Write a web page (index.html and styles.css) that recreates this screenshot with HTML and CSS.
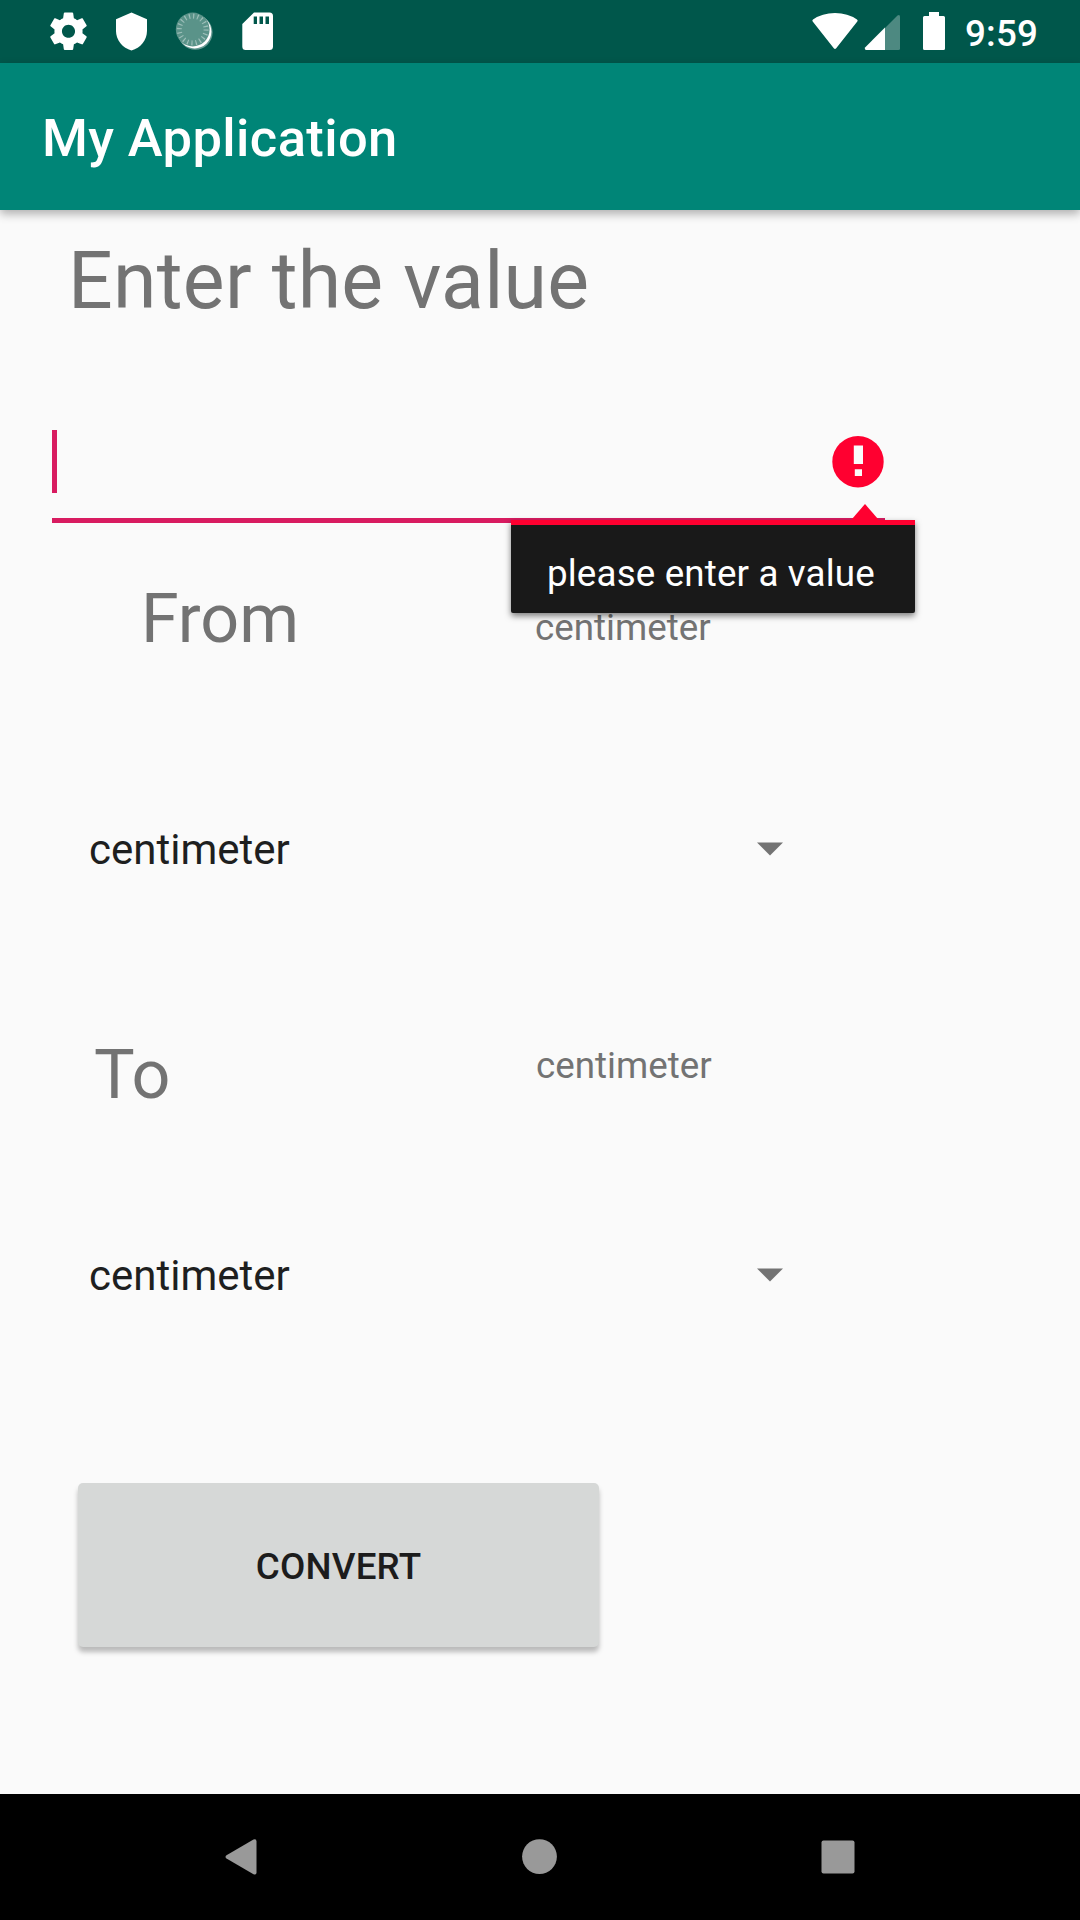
FILE: index.html
```html
<!DOCTYPE html>
<html lang="en">
<head>
<meta charset="utf-8">
<title>My Application</title>
<link rel="stylesheet" href="styles.css">
</head>
<body>
<div class="screen">
  <div class="status-bar">
    <svg class="status-left" width="300" height="63" viewBox="0 0 300 63" fill="#fff">
      <path transform="translate(46 8.8) scale(1.875)" d="M19.43 12.98c.04-.32.07-.64.07-.98s-.03-.66-.07-.98l2.11-1.65c.19-.15.24-.42.12-.64l-2-3.46c-.12-.22-.39-.3-.61-.22l-2.49 1c-.52-.4-1.08-.73-1.69-.98l-.38-2.65C14.46 2.18 14.25 2 14 2h-4c-.25 0-.46.18-.49.42l-.38 2.65c-.61.25-1.17.59-1.69.98l-2.49-1c-.23-.09-.49 0-.61.22l-2 3.46c-.13.22-.07.49.12.64l2.11 1.65c-.04.32-.07.65-.07.98s.03.66.07.98l-2.11 1.65c-.19.15-.24.42-.12.64l2 3.46c.12.22.39.3.61.22l2.49-1c.52.4 1.08.73 1.69.98l.38 2.65c.03.24.24.42.49.42h4c.25 0 .46-.18.49-.42l.38-2.65c.61-.25 1.17-.59 1.69-.98l2.49 1c.23.09.49 0 .61-.22l2-3.46c.12-.22.07-.49-.12-.64l-2.11-1.65zM12 15.5c-1.93 0-3.5-1.57-3.5-3.5s1.57-3.5 3.5-3.5 3.5 1.57 3.5 3.5-1.57 3.5-3.5 3.5z"/>
      <path d="M131.5 12.4L116 19.2V31C116 40 122.6 48.2 131.5 50.4C140.4 48.2 147 40 147 31V19.2Z"/>
      <circle cx="195.300" cy="32.500" r="17.300" opacity=".4"/>
      <circle cx="194.600" cy="31.600" r="16.800"/>
      <circle cx="192.700" cy="29.500" r="16.900" fill="#5a9389"/>
      <circle cx="192.700" cy="29.500" r="13.400" fill="none" stroke="#9dbfb9" stroke-width="5" stroke-dasharray="1.2 3.01"/>
      <path fill-rule="evenodd" d="M254 12.500H269.500Q273 12.500 273 16V46.500Q273 50 269.500 50H245.700Q242.300 50 242.300 46.500V24ZM253.700 16.500V24H257V16.500ZM259.500 16.500V24H263V16.500ZM265.500 16.500V24H269V16.500Z"/>
    </svg>
    <div class="status-right">
      <svg width="140" height="63" viewBox="810 0 140 63" fill="#fff">
        <path d="M812.700 21.500Q811.800 20.500 813 19.600Q822 13 835 13Q848 13 857 19.600Q858.200 20.500 857.300 21.500L836.200 48.200Q835 49.600 833.800 48.200Z"/>
        <path d="M885 28L897.500 15.500Q900 13.800 900 17V48.500Q900 50 898.500 50H885Z" opacity=".3"/>
        <path d="M885 27.500V50H866Q864 49.500 865.300 47.300Z"/>
        <path d="M929 12H939V16H943.500Q945 16 945 17.500V48.500Q945 50 943.500 50H924.500Q923 50 923 48.500V17.500Q923 16 924.500 16H929Z"/>
      </svg>
      <span class="clock">9:59</span>
    </div>
  </div>
  <header class="app-bar"><h1 class="app-title">My Application</h1></header>
  <main class="form">
    <label class="heading">Enter the value</label>
    <div class="field">
      <span class="caret"></span>
      <svg class="error-icon" width="52" height="52" viewBox="0 0 52 52">
        <circle cx="26" cy="25.700" r="25.700" fill="#ff0030"/>
        <path fill="#fafafa" d="M21.800 9.500H31V28H21.800ZM22.800 33.300H30V40H22.800Z"/>
      </svg>
      <div class="popup">
        <svg class="popup-arrow" width="26" height="16" viewBox="0 0 26 16"><path fill="#ff0030" d="M13 0L26 15V16H0V15Z"/></svg>
        <span class="popup-text">please enter a value</span>
      </div>
    </div>
    <div class="unit-row from-row">
      <span class="unit-title">From</span>
      <span class="unit-value">centimeter</span>
    </div>
    <div class="spinner from-spinner">
      <span>centimeter</span>
      <svg class="drop" width="28" height="14" viewBox="0 0 28 14"><path fill="#737373" d="M1 .5H27L14 13.500Z"/></svg>
    </div>
    <div class="unit-row to-row">
      <span class="unit-title">To</span>
      <span class="unit-value">centimeter</span>
    </div>
    <div class="spinner to-spinner">
      <span>centimeter</span>
      <svg class="drop" width="28" height="14" viewBox="0 0 28 14"><path fill="#737373" d="M1 .5H27L14 13.500Z"/></svg>
    </div>
    <button class="convert" type="button">CONVERT</button>
  </main>
  <nav class="nav-bar">
    <svg width="1080" height="126" viewBox="0 0 1080 126" fill="#999">
      <path d="M226.500 61.300L253.500 45.600Q256.500 44.500 256.500 47.500V78.500Q256.500 81.500 253.500 80.200L226.500 64.500Q224.500 62.900 226.500 61.300Z"/>
      <circle cx="539.500" cy="62.600" r="17.400"/>
      <rect x="821.500" y="46.500" width="33" height="33" rx="2"/>
    </svg>
  </nav>
</div>
</body>
</html>
```
FILE: styles.css
```css
* { box-sizing: border-box; }
body { margin: 0; font-family: Roboto, sans-serif; background: #fafafa; }
svg { display: block; flex: none; }
.screen { width: 1080px; height: 1920px; display: flex; flex-direction: column; overflow: hidden; }

.status-bar { height: 63px; flex: none; display: flex; justify-content: space-between; background: #00574b; color: #fff; }
.status-right { display: flex; width: 270px; }
.clock { margin-left: 15px; font-size: 36.75px; font-weight: 500; line-height: 43px; letter-spacing: .2px; padding-top: 12px; }

.app-bar { height: 147px; flex: none; padding: 44px 42px 0; background: #008577; box-shadow: 0 4px 9px rgba(0, 0, 0, .3); }
.app-title { margin: 0; font-size: 52.5px; font-weight: 500; line-height: 62px; letter-spacing: .38px; color: #fff; }

.form { flex: 1; display: flex; flex-direction: column; align-items: flex-start; color: #737373; }
.heading { margin: 25px 0 0 68px; font-size: 78.75px; line-height: 92px; letter-spacing: .28px; }

.field { position: relative; display: flex; justify-content: space-between; width: 833px; height: 103px; margin: 93px 0 0 52px; padding-top: 10px; border-bottom: 5px solid #d81b60; }
.caret { width: 5px; height: 63px; background: #d81b60; }
.error-icon { margin: 6px 1px 0 0; }
.popup { position: absolute; left: 459px; top: 100px; width: 404px; height: 93px; padding: 27px 0 0 36px; background: #191919; border-top: 5px solid #ff0030; border-radius: 0 0 2px 2px; box-shadow: 0 3px 6px rgba(0, 0, 0, .5); }
.popup-arrow { position: absolute; left: 341px; top: -21px; }
.popup-text { display: block; font-size: 36.75px; line-height: 43px; letter-spacing: .15px; color: #fff; white-space: nowrap; }

.unit-row { display: grid; grid-template-columns: 535px auto; align-items: start; height: 80px; }
.unit-title { font-size: 68.25px; line-height: 80px; }
.unit-value { font-size: 36.75px; line-height: 43px; }
.from-row { margin-top: 56px; }
.from-row .unit-title { padding-left: 141px; }
.from-row .unit-value { padding-top: 27px; }
.to-row { margin-top: 160px; grid-template-columns: 536px auto; }
.to-row .unit-title { padding-left: 94px; }
.to-row .unit-value { padding-top: 9px; }

.spinner { display: flex; justify-content: space-between; width: 694.5px; height: 50px; margin-left: 89px; font-size: 42px; line-height: 50px; color: #1e1f1f; }
.drop { margin-top: 17px; }
.from-spinner { margin-top: 166px; }
.to-spinner { margin-top: 136px; }

.convert { width: 521px; height: 164px; margin: 182px 0 0 78px; padding: 2px 0 0; border: 0; border-radius: 5px; background: #d6d8d7; box-shadow: 0 5px 5px rgba(0, 0, 0, .26); font: 500 36.75px/43px Roboto, sans-serif; letter-spacing: .2px; color: #1c1c1c; }

.nav-bar { height: 126px; flex: none; background: #000; }
```
